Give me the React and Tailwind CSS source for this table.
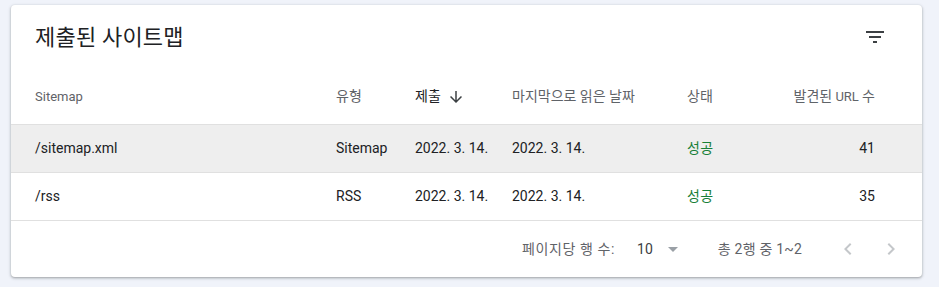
import React from "react";

const font = { fontFamily: '"Roboto", "Noto Sans CJK KR", sans-serif' };

function Row({ path, type, submitted, lastRead, count, shaded }) {
  return (
    <div
      className={`flex items-center h-12 border-b border-[#e0e0e0] pl-6 pr-[47px] text-[14px] text-[#202124] ${
        shaded ? "bg-[#eeeeee]" : "bg-white"
      }`}
    >
      <div className="w-[301px]">{path}</div>
      <div className="w-[79px]">{type}</div>
      <div className="w-[97px]">{submitted}</div>
      <div className="w-[175px]">{lastRead}</div>
      <div className="flex-1 text-[#188038] tracking-[0.3px]">성공</div>
      <div className="text-right">{count}</div>
    </div>
  );
}

export default function App() {
  return (
    <div className="h-[287px] w-[939px] bg-[#f0f3fa] pt-[5px] pl-[11px]" style={font}>
      <div className="w-[911px] h-[272px] bg-white rounded-[4px] shadow-[0_1px_2px_0_rgba(60,64,67,0.3),0_1px_3px_1px_rgba(60,64,67,0.15)] overflow-hidden flex flex-col">
        <div className="h-16 flex items-center justify-between pl-6 pr-[27px]">
          <div className="text-[22px] tracking-[0.2px] text-[#202124] font-normal">제출된 사이트맵</div>
          <div className="w-10 h-10 flex items-center justify-center">
            <svg width="24" height="24" viewBox="0 0 24 24" fill="#3c4043">
              <path d="M10 18h4v-2h-4v2zM3 6v2h18V6H3zm3 7h12v-2H6v2z" />
            </svg>
          </div>
        </div>
        <div className="flex items-center h-14 border-b border-[#e0e0e0] pl-6 pr-[47px] text-[13px] text-[#5f6368]">
          <div className="w-[301px]">Sitemap</div>
          <div className="w-[79px] text-[14px]">유형</div>
          <div className="w-[97px] flex items-center text-[#202124]">
            <span className="text-[14px]">제출</span>
            <svg className="ml-[6px]" width="18" height="18" viewBox="0 0 24 24" fill="#3c4043">
              <path d="M20 12l-1.41-1.41L13 16.17V4h-2v12.17l-5.58-5.59L4 12l8 8 8-8z" />
            </svg>
          </div>
          <div className="w-[175px] text-[14px]">마지막으로 읽은 날짜</div>
          <div className="flex-1 text-[14px]">상태</div>
          <div className="text-right">
            <span className="text-[14px]">발견된</span> URL <span className="text-[14px]">수</span>
          </div>
        </div>
        <Row path="/sitemap.xml" type="Sitemap" submitted="2022. 3. 14." lastRead="2022. 3. 14." count="41" shaded />
        <Row path="/rss" type="RSS" submitted="2022. 3. 14." lastRead="2022. 3. 14." count="35" />
        <div className="h-14 flex items-center justify-end pr-[19px] text-[14px] text-[#5f6368]">
          <span className="tracking-[0.6px]">페이지당 행 수:</span>
          <span className="ml-[22px] text-[14px] text-[#3c4043]">10</span>
          <svg className="ml-2" width="24" height="24" viewBox="0 0 24 24" fill="#9aa0a6">
            <path d="M7 10l5 5 5-5z" />
          </svg>
          <span className="ml-[33px] tracking-[0.2px]">총 2행 중 1~2</span>
          <div className="ml-[34px] flex items-center gap-[19px]">
            <svg width="24" height="24" viewBox="0 0 24 24" fill="#c4c7ca">
              <path d="M15.41 7.41L14 6l-6 6 6 6 1.41-1.41L10.83 12z" />
            </svg>
            <svg width="24" height="24" viewBox="0 0 24 24" fill="#c4c7ca">
              <path d="M8.59 16.59L10 18l6-6-6-6-1.41 1.41L13.17 12z" />
            </svg>
          </div>
        </div>
      </div>
    </div>
  );
}
